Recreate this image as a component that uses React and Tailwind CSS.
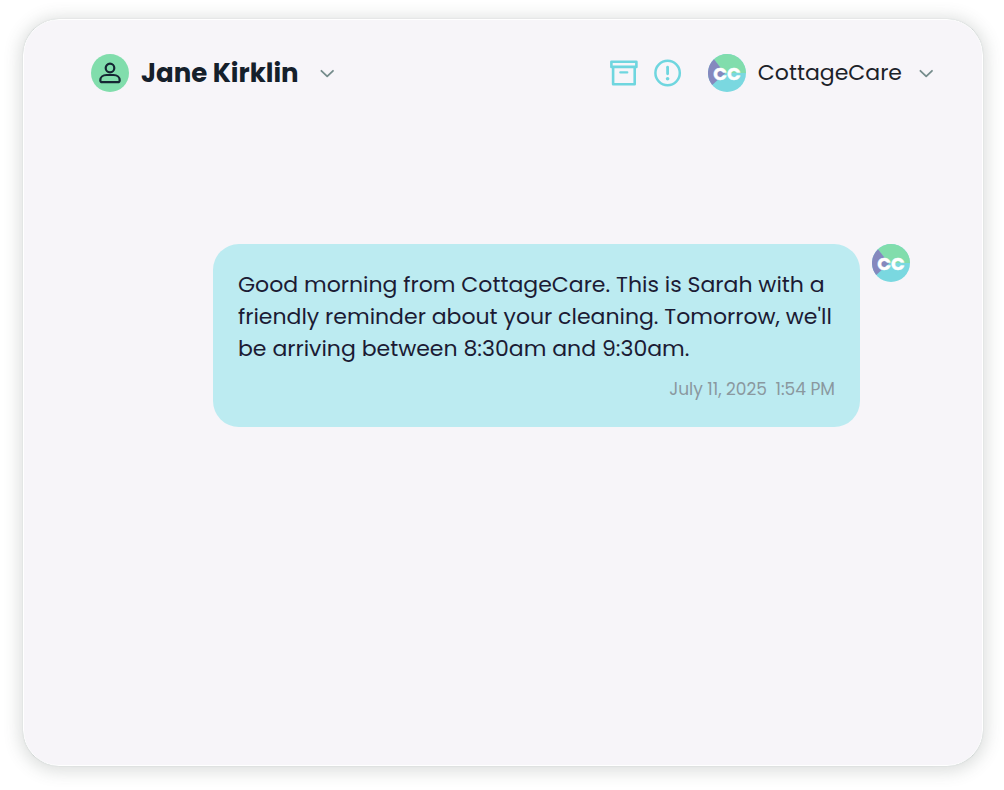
function CompanyLogo() {
  return (
    <svg className="w-[38px] h-[38px] shrink-0" viewBox="0 0 38 38" aria-hidden="true">
      <circle cx="19" cy="19" r="19" fill="#7ad8e0" />
      <path d="M16 19 L6 5.200 A19 19 0 0 1 38 19 Z" fill="#81ddac" />
      <path d="M17 19.500 L4.200 31 A19 19 0 0 1 6 5.200 Z" fill="#8588be" />
      <text x="19" y="25.500" textAnchor="middle" fontSize="18" fontWeight="700" fill="#ffffff" stroke="#ffffff" strokeWidth="0.4" fontFamily="Poppins, Inter, sans-serif">CC</text>
    </svg>
  );
}

function Chevron() {
  return (
    <svg className="w-4 h-4 text-[#758c8c]" viewBox="0 0 16 16" fill="none" stroke="currentColor" aria-hidden="true">
      <path strokeLinecap="round" strokeLinejoin="round" strokeWidth={1.8} d="M2.4 5.800L8.200 11.400l5.800-5.600" />
    </svg>
  );
}

function ChatHeader() {
  return (
    <header className="flex items-center justify-between pt-[34px] pl-[67px] pr-12">
      <button type="button" className="flex items-center gap-3">
        <span className="w-[38px] h-[38px] rounded-full bg-[#81ddac] flex items-center justify-center">
          <svg className="w-6 h-6 text-[#152533]" viewBox="0 0 24 24" fill="none" stroke="currentColor" aria-hidden="true">
            <circle cx="12" cy="7" r="4.300" strokeWidth={2.200} />
            <path strokeLinejoin="round" strokeWidth={2.200} d="M8.5 14h7c3.600 0 6.200 2.300 6.200 5.200 0 1.400-.6 2-2 2H4.300c-1.400 0-2-.6-2-2 0-2.900 2.600-5.200 6.200-5.200z" />
          </svg>
        </span>
        <span className="text-[26px] leading-8 font-bold text-[#15202b]">Jane Kirklin</span>
        <span className="pl-2"><Chevron /></span>
      </button>

      <div className="flex items-center">
        <button type="button" aria-label="Archive conversation" className="mr-4 text-[#6fd6df]">
          <svg className="w-7 h-7" viewBox="0 0 28 28" fill="none" stroke="currentColor" strokeWidth={2.600} strokeLinejoin="round" aria-hidden="true">
            <path d="M1.400 2.700h25v5.200h-25zM3.100 7.900h21.600v17.400H3.100z" />
            <path strokeLinecap="round" strokeWidth={2.200} d="M10.300 13.400h7" />
          </svg>
        </button>
        <button type="button" aria-label="Report conversation" className="mr-[26px] text-[#6fd6df]">
          <svg className="w-7 h-7" viewBox="0 0 28 28" fill="none" stroke="currentColor" strokeWidth={2.500} aria-hidden="true">
            <circle cx="13.600" cy="14" r="12.200" />
            <path strokeLinecap="round" strokeWidth={2.800} d="M13.600 8.200v6.600" />
            <circle cx="13.600" cy="19.800" r="1.800" fill="currentColor" stroke="none" />
          </svg>
        </button>
        <button type="button" className="flex items-center gap-3">
          <CompanyLogo />
          <span className="text-[22px] leading-8 text-[#1c2229]">CottageCare</span>
          <span className="pl-1"><Chevron /></span>
        </button>
      </div>
    </header>
  );
}

function Message({ text, date, time }) {
  return (
    <div className="flex items-start justify-end gap-3 mt-[152px] pl-[189px] pr-[72px]">
      <div className="flex-1 rounded-[26px] bg-[#bcebf1] px-[25px] pt-[25px] pb-6">
        <p className="text-[22px] leading-8 text-[#1b1b34]">{text}</p>
        <p className="mt-[10px] text-right text-[17px] leading-7 text-[#8a989f]">
          {date} <time className="ml-1">{time}</time>
        </p>
      </div>
      <CompanyLogo />
    </div>
  );
}

export default function App() {
  return (
    <div className="min-h-screen flex flex-col bg-white pt-[19px] pr-[21px] pb-6 pl-[23px] font-['Poppins','Inter',sans-serif]">
      <main className="flex-1 rounded-[36px] bg-[#f7f5f9] border border-white shadow-[0_0_1px_0_rgba(130,150,150,0.5),0_2px_16px_4px_rgba(70,85,80,0.18)]">
        <ChatHeader />
        <Message
          text="Good morning from CottageCare. This is Sarah with a friendly reminder about your cleaning. Tomorrow, we'll be arriving between 8:30am and 9:30am."
          date="July 11, 2025"
          time="1:54 PM"
        />
      </main>
    </div>
  );
}
